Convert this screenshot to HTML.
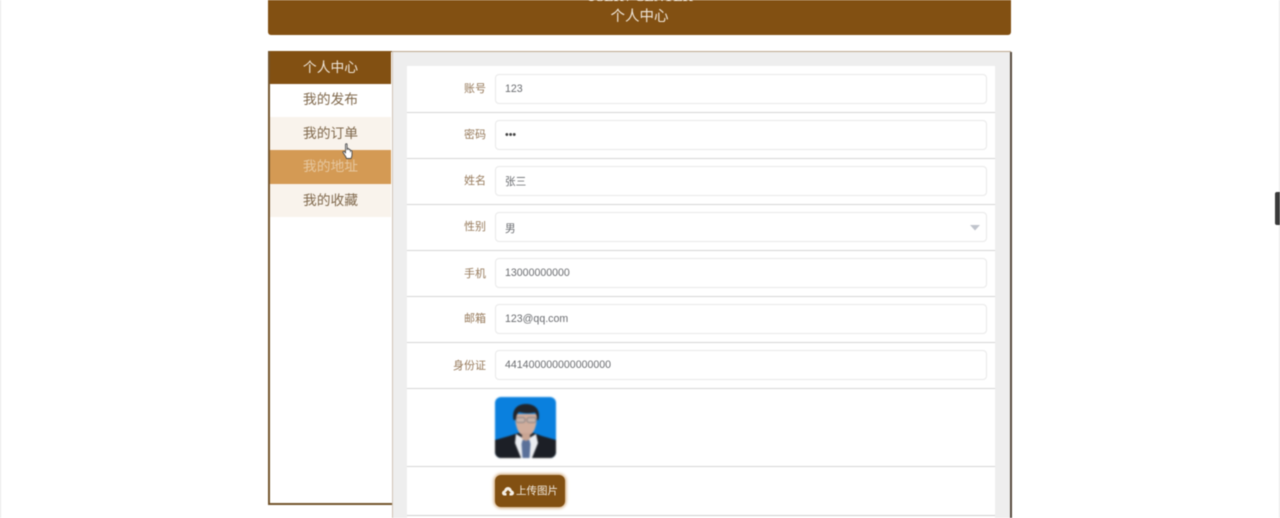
<!DOCTYPE html>
<html lang="zh">
<head>
<meta charset="utf-8">
<title>个人中心</title>
<style>
html,body{margin:0;padding:0;background:#fff}
body{width:1280px;height:518px;overflow:hidden;position:relative;font-family:"Liberation Sans","Noto Sans CJK SC",sans-serif}
#blur{position:absolute;left:0;top:0;width:1280px;height:518px;overflow:hidden;filter:blur(.5px)}
#blur div,#blur svg{position:absolute;box-sizing:border-box}
.edge{top:0;width:1px;height:518px;background:#e8e8e8}
.head{left:268px;top:-10px;width:743px;height:45px;background:#825012;border-radius:0 0 3px 3px}
.t{left:268px;width:743px;text-align:center;color:#efe5d8;white-space:nowrap}
.side{left:268px;top:51px;width:124px;height:454px;background:#fff;border:1px solid #74552c;border-width:1px 0 2px 2px}
.nav{left:270px;width:121px;text-align:center;font-size:13.800px;line-height:33px;color:#80694d}
.main{left:392px;top:51px;width:619px;height:467px;background:#eeeeee;border-top:1px solid #bda98f;border-left:1px solid #cfc3b4}
.rb{left:1010px;top:52px;width:2px;height:466px;background:#574a3e}
.form{left:407px;top:66px;width:588px;height:452px;background:#fff}
.sep{left:407px;width:588px;height:1.500px;background:#d6d6d6}
.lb{left:407px;width:79px;text-align:right;font-size:11px;line-height:16px;color:#96795a;white-space:nowrap}
.inp{left:495px;width:492px;height:30px;background:#fff;border:1px solid #e9e9e9;border-radius:4px;font-size:10.600px;line-height:29px;padding-left:9px;color:#6a6c70}
.btn{left:495px;top:475px;width:70px;height:32px;background:#825012;border-radius:6px;box-shadow:0 0 3px 1px #c89a64;color:#f3ece2;font-size:10.500px;line-height:33px;padding-left:21px;white-space:nowrap}
</style>
</head>
<body>
<div id="blur">
<div class="edge" style="left:0"></div>
<div class="edge" style="left:1279px"></div>
<div class="head"></div>
<div class="t" style="top:-10px;font-size:14px;line-height:16px;font-family:'Liberation Serif',serif;font-weight:bold">USER / CENTER</div>
<div class="t" style="top:8px;font-size:14.500px;line-height:18px">个人中心</div>

<div class="side"></div>
<div class="nav" style="top:51px;height:33px;background:#825012;color:#efe5d8">个人中心</div>
<div class="nav" style="top:84px;height:33px;background:#fff;line-height:31px">我的发布</div>
<div class="nav" style="top:117px;height:33px;background:#f9f3ec">我的订单</div>
<div class="nav" style="top:150px;height:34px;background:#d49a54;color:#e6c79f">我的地址</div>
<div class="nav" style="top:184px;height:33px;background:#f9f3ec">我的收藏</div>

<svg style="left:342px;top:143px" width="13" height="18" viewBox="0 0 13 18"><path d="M3.500 1.500c0-1 1.600-1 1.600 0V7l.2-1.200c.3-.8 1.500-.6 1.500.2l.1 1c.2-.8 1.500-.7 1.500.2l.1.800c.3-.7 1.500-.5 1.500.4v3.600c0 1.500-.6 2.500-1 3.500H4.500C4 14 3.500 13 2.500 11.800L1 9.500c-.5-.9.600-1.600 1.300-.9l1.200 1.200z" fill="#fff" stroke="#4a4a4a" stroke-width=".9"/></svg>

<div class="main"></div>
<div class="rb"></div>
<div class="form"></div>
<div class="sep" style="top:111.500px"></div>
<div class="sep" style="top:157.500px"></div>
<div class="sep" style="top:203.500px"></div>
<div class="sep" style="top:249.500px"></div>
<div class="sep" style="top:295.500px"></div>
<div class="sep" style="top:341.500px"></div>
<div class="sep" style="top:387.500px"></div>
<div class="sep" style="top:465.500px"></div>
<div class="sep" style="top:515px;height:1px;background:#cfcfcf"></div>

<div class="lb" style="top:81px">账号</div>
<div class="inp" style="top:74px;line-height:28px">123</div>
<div class="lb" style="top:127px">密码</div>
<div class="inp" style="top:120px;line-height:28px;color:#444">•••</div>
<div class="lb" style="top:173px">姓名</div>
<div class="inp" style="top:166px;line-height:31px">张三</div>
<div class="lb" style="top:219px">性别</div>
<div class="inp" style="top:212px;line-height:33px">男</div>
<svg style="left:970px;top:225px" width="10" height="6" viewBox="0 0 10 6"><path d="M0 0h10L5 5.500z" fill="#c0c4cc"/></svg>
<div class="lb" style="top:266px">手机</div>
<div class="inp" style="top:258px">13000000000</div>
<div class="lb" style="top:311px">邮箱</div>
<div class="inp" style="top:304px">123@qq.com</div>
<div class="lb" style="top:358px">身份证</div>
<div class="inp" style="top:350px">441400000000000000</div>

<svg style="left:495px;top:397px;filter:blur(.7px)" width="61" height="61" viewBox="0 0 61 61">
<defs><clipPath id="c"><rect width="61" height="61" rx="6"/></clipPath></defs>
<g clip-path="url(#c)">
<rect width="61" height="61" fill="#0a80de"/>
<path d="M0 43l14-4 9-3h16l8 3 14 4v18H0z" fill="#1c1f26"/>
<path d="M21 37l10 6 10-6 2 9-6 15H26l-6-15z" fill="#eceef2"/>
<path d="M27.500 43h7l1 4-1 14h-7l-1-14z" fill="#5a7099"/>
<path d="M20 17c0 14 4 22 11 22s11-8 11-22z" fill="#d0ad9c"/>
<path d="M27 36h8v6l-4 2-4-2z" fill="#c9a593"/>
<path d="M18.500 23c-2-11 4-16 12.500-16s15 5 12.500 16h-1.500c0-3-.5-6-2-7.500-5 1-11 1-16-.5-2 1.500-3 4.500-3 8z" fill="#20242a"/>
<rect x="21" y="20.500" width="9" height="5" rx="2" fill="#c7b2a8" stroke="#77767a" stroke-width=".8"/>
<rect x="32" y="20.500" width="9" height="5" rx="2" fill="#c7b2a8" stroke="#77767a" stroke-width=".8"/>
</g>
</svg>

<div class="btn">上传图片</div>
<svg style="left:502px;top:487px" width="12" height="9" viewBox="0 0 12 9"><path d="M2.500 8.500C1 8.500 0 7.400 0 6c0-1.300.9-2.300 2.100-2.500C2.500 1.500 4.100 0 6 0s3.500 1.500 3.900 3.500C11.100 3.700 12 4.700 12 6c0 1.400-1 2.500-2.500 2.500H7.500V6H9L6 3 3 6h1.500v2.500z" fill="#f5efe6"/></svg>

<div style="left:1275px;top:192px;width:5px;height:33px;background:#3a3a3a;border-radius:2px 0 0 2px"></div>
</div>
</body>
</html>
